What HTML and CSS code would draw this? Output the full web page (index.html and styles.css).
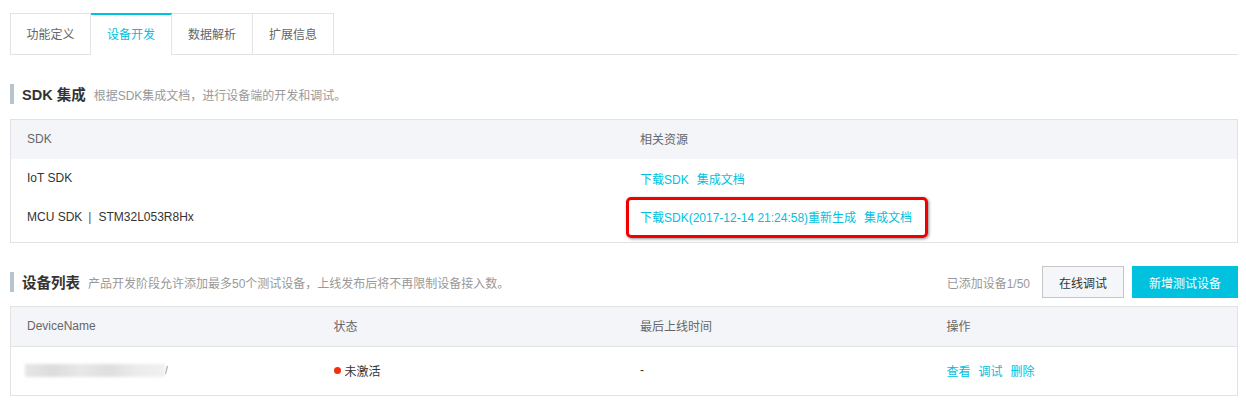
FILE: index.html
```html
<!DOCTYPE html>
<html lang="zh">
<head>
<meta charset="utf-8">
<link rel="stylesheet" href="styles.css">
</head>
<body>
<div class="page">
  <div class="tabs">
    <div class="tab">功能定义</div>
    <div class="tab active">设备开发</div>
    <div class="tab">数据解析</div>
    <div class="tab">扩展信息</div>
  </div>

  <div class="sec-head sec-sdk">
    <div class="sec-title">
      <span class="bar"></span>
      <span class="title">SDK 集成</span>
      <span class="desc">根据SDK集成文档，进行设备端的开发和调试。</span>
    </div>
  </div>

  <div class="table t2col">
    <div class="thead">
      <div class="cell">SDK</div>
      <div class="cell">相关资源</div>
    </div>
    <div class="tbody sdk-body">
      <div class="row">
        <div class="cell">IoT SDK</div>
        <div class="cell links"><a>下载SDK</a><a>集成文档</a></div>
      </div>
      <div class="row">
        <div class="cell">MCU SDK<span class="sep">|</span>STM32L053R8Hx</div>
        <div class="cell links mark-cell"><a>下载SDK(2017-12-14 21:24:58)重新生成</a><a>集成文档</a><span class="redbox"></span></div>
      </div>
    </div>
  </div>

  <div class="sec-head sec-dev">
    <div class="sec-title">
      <span class="bar"></span>
      <span class="title">设备列表</span>
      <span class="desc">产品开发阶段允许添加最多50个测试设备，上线发布后将不再限制设备接入数。</span>
    </div>
    <div class="sec-actions">
      <span class="count">已添加设备1/50</span>
      <button class="btn btn-default">在线调试</button>
      <button class="btn btn-primary">新增测试设备</button>
    </div>
  </div>

  <div class="table t4col">
    <div class="thead">
      <div class="cell">DeviceName</div>
      <div class="cell">状态</div>
      <div class="cell">最后上线时间</div>
      <div class="cell">操作</div>
    </div>
    <div class="tbody dev-body">
      <div class="row">
        <div class="cell"><span class="blurred"></span><span class="tick">/</span></div>
        <div class="cell"><span class="dot"></span>未激活</div>
        <div class="cell">-</div>
        <div class="cell links"><a>查看</a><a>调试</a><a>删除</a></div>
      </div>
    </div>
  </div>
</div>
</body>
</html>
```

FILE: styles.css
```css
* { box-sizing: border-box; }
html, body { margin: 0; padding: 0; background: #fff; }
body {
  font-family: "Liberation Sans", "Noto Sans CJK SC", sans-serif;
  font-size: 12px;
  color: #333;
}
.page {
  width: 1228px;
  margin-left: 10px;
  padding-top: 13px;
}
.tabs {
  display: flex;
  height: 42px;
  border-bottom: 1px solid #e3e3e3;
}
.tab {
  width: 81px;
  height: 41px;
  border: 1px solid #e3e3e3;
  border-left: none;
  border-bottom: none;
  display: flex;
  align-items: center;
  justify-content: center;
  color: #666;
  background: #fff;
  padding-bottom: 2px;
}
.tab:first-child { border-left: 1px solid #e3e3e3; }
.tab.active {
  height: 42px;
  border-top: 2px solid #00c1de;
  color: #00c1de;
  margin-bottom: -1px;
  padding-bottom: 3px;
}
.sec-head {
  display: flex;
  align-items: center;
  justify-content: space-between;
}
.sec-sdk { margin-top: 29px; height: 20px; }
.sec-dev { margin-top: 23px; height: 32px; }
.sec-title { display: flex; align-items: center; }
.bar {
  width: 4px;
  height: 20px;
  background: #b8c4cd;
  margin-right: 8px;
}
.title {
  font-size: 14.5px;
  font-weight: bold;
  color: #333;
  margin-right: 8px;
  padding-bottom: 1px;
}
.desc { color: #999; font-size: 12px; }
.sec-actions { display: flex; align-items: center; }
.count { color: #999; margin-right: 12px; }
.btn {
  font-family: inherit;
  font-size: 12px;
  height: 32px;
  padding: 0;
  cursor: pointer;
}
.btn-default {
  width: 82px;
  border: 1px solid #c6c6c6;
  background: #f5f6f9;
  color: #333;
  margin-right: 8px;
}
.btn-primary {
  width: 106px;
  border: 1px solid #00c1de;
  background: #00c1de;
  color: #fff;
}
.table {
  border: 1px solid #e3e3e3;
}
.t2col { margin-top: 15px; }
.t4col { margin-top: 8px; }
.thead, .row {
  display: grid;
}
.t2col .thead, .t2col .row { grid-template-columns: 1fr 1fr; }
.t4col .thead, .t4col .row { grid-template-columns: 1fr 1fr 1fr 1fr; }
.thead {
  background: #f4f5f9;
  color: #666;
  height: 39px;
  align-items: center;
}
.t4col .thead { height: 40px; border-bottom: 1px solid #e3e3e3; }
.cell {
  padding-left: 16px;
  display: flex;
  align-items: center;
  position: relative;
  padding-bottom: 2px;
}
.sdk-body { padding-bottom: 6px; }
.sdk-body .row { height: 38px; }
.sdk-body .row + .row { height: 39px; }
.sdk-body .cell { padding-bottom: 0; }
.dev-body .row { height: 48px; }
.links a {
  color: #00c1de;
  margin-right: 8px;
  cursor: pointer;
}
.sep { margin: 0 7px 0 6px; color: #555; }
.redbox {
  position: absolute;
  left: 2px;
  top: 0;
  width: 302px;
  height: 41px;
  border: 3px solid #f20000;
  border-radius: 5px;
  box-shadow: 1px 1px 3px rgba(0,0,0,0.45);
  pointer-events: none;
}
.blurred {
  display: inline-block;
  width: 140px;
  height: 13px;
  background: linear-gradient(90deg, #e6e6e6 0%, #dcdcdc 20%, #e8e8e8 40%, #dedede 60%, #ececec 80%, #f0f0f0 100%);
  filter: blur(1.5px);
  margin-left: -2px;
}
.tick { color: #777; font-size: 10px; margin-left: 0; }
.dot {
  display: inline-block;
  width: 7px;
  height: 7px;
  border-radius: 50%;
  background: #f2300f;
  margin-right: 4px;
}
```
